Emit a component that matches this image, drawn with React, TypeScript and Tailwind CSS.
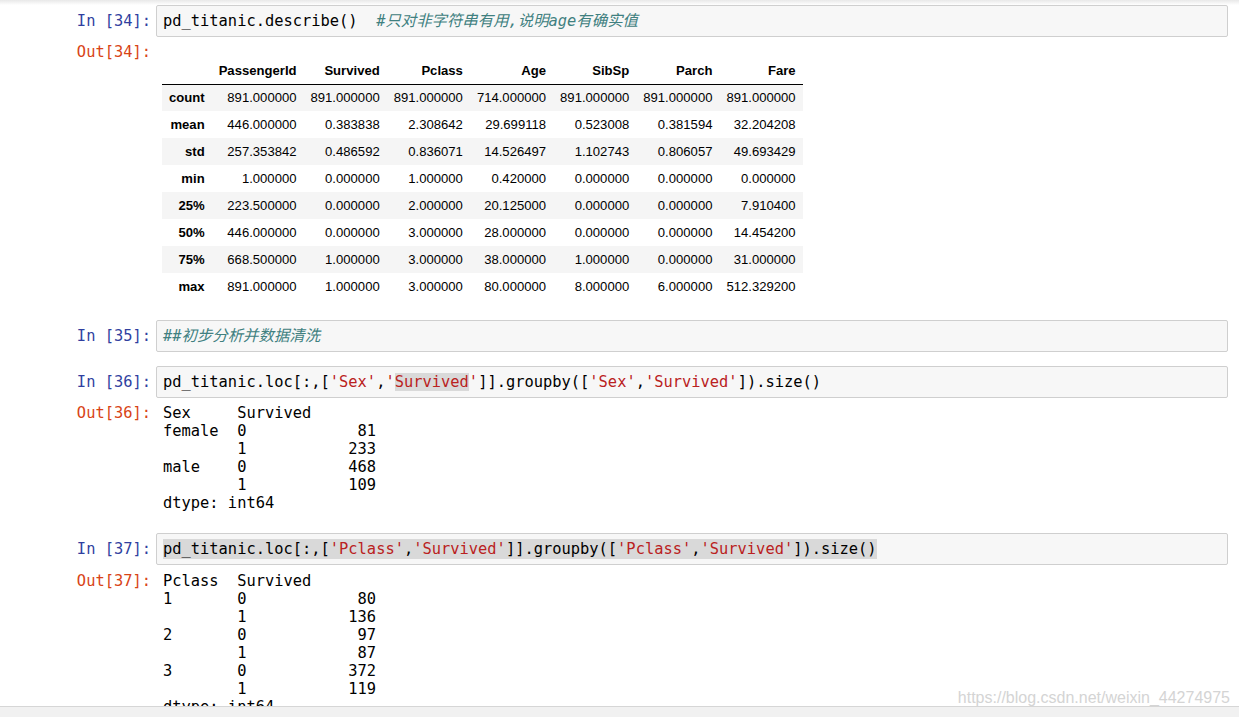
import React from 'react'

const mono = "font-['DejaVu_Sans_Mono','Noto_Sans_CJK_SC',monospace] text-[15.4px] leading-[18px]"

const columns = ['PassengerId', 'Survived', 'Pclass', 'Age', 'SibSp', 'Parch', 'Fare']

const rows: [string, string[]][] = [
  ['count', ['891.000000', '891.000000', '891.000000', '714.000000', '891.000000', '891.000000', '891.000000']],
  ['mean', ['446.000000', '0.383838', '2.308642', '29.699118', '0.523008', '0.381594', '32.204208']],
  ['std', ['257.353842', '0.486592', '0.836071', '14.526497', '1.102743', '0.806057', '49.693429']],
  ['min', ['1.000000', '0.000000', '1.000000', '0.420000', '0.000000', '0.000000', '0.000000']],
  ['25%', ['223.500000', '0.000000', '2.000000', '20.125000', '0.000000', '0.000000', '7.910400']],
  ['50%', ['446.000000', '0.000000', '3.000000', '28.000000', '0.000000', '0.000000', '14.454200']],
  ['75%', ['668.500000', '1.000000', '3.000000', '38.000000', '1.000000', '0.000000', '31.000000']],
  ['max', ['891.000000', '1.000000', '3.000000', '80.000000', '8.000000', '6.000000', '512.329200']],
]

function Prompt({ kind, n }: { kind: 'in' | 'out'; n: number }) {
  return (
    <div
      className={`${mono} w-[156px] shrink-0 pr-[5px] text-right whitespace-pre ${
        kind === 'in' ? 'text-[#303F9F]' : 'text-[#D84315]'
      }`}
    >
      {kind === 'in' ? `In [${n}]:` : `Out[${n}]:`}
    </div>
  )
}

function InputCell({ n, children, className = '' }: { n: number; children: React.ReactNode; className?: string }) {
  return (
    <div className={`flex items-center ${className}`}>
      <Prompt kind="in" n={n} />
      <div className="flex-1 mr-[11px] h-[32px] flex items-center px-[6px] bg-[#f7f7f7] border border-[#cfcfcf] rounded-[2px]">
        <div className={`${mono} text-black whitespace-pre`}>{children}</div>
      </div>
    </div>
  )
}

const S = ({ children }: { children: React.ReactNode }) => <span className="text-[#BA2121]">{children}</span>
const C = ({ children }: { children: React.ReactNode }) => <span className="text-[#408080] italic">{children}</span>

export default function App() {
  return (
    <div className="h-[717px] w-full flex flex-col overflow-hidden bg-white relative">
      <div className="h-[5px] shrink-0 bg-gradient-to-b from-[#e8e8e8] to-white" />

      <div className="flex-1 overflow-hidden">
        {/* In 34 */}
        <InputCell n={34}>
          pd_titanic.describe()  <C>#只对非字符串有用,说明age有确实值</C>
        </InputCell>

        <div className="flex mt-[6px]">
          <Prompt kind="out" n={34} />
          <div className="pl-[6px] pt-[15px]">
            <table className="border-collapse font-['Liberation_Sans',Arial,sans-serif] text-[13.1px] text-black">
              <thead>
                <tr className="h-[26px] border-b border-black">
                  <th className="px-[7px]" />
                  {columns.map((c) => (
                    <th key={c} className="px-[7px] text-right font-bold">
                      {c}
                    </th>
                  ))}
                </tr>
              </thead>
              <tbody>
                {rows.map(([label, vals], i) => (
                  <tr key={label} className={`h-[27px] ${i % 2 === 0 ? 'bg-[#f5f5f5]' : 'bg-white'}`}>
                    <th className="px-[7px] text-right font-bold">{label}</th>
                    {vals.map((v, j) => (
                      <td key={j} className="px-[7px] text-right">
                        {v}
                      </td>
                    ))}
                  </tr>
                ))}
              </tbody>
            </table>
          </div>
        </div>

        {/* In 35 */}
        <InputCell n={35} className="mt-[20px]">
          <C>##初步分析并数据清洗</C>
        </InputCell>

        {/* In 36 */}
        <InputCell n={36} className="mt-[14px]">
          pd_titanic.loc[:,[<S>'Sex'</S>,<S>'<span className="bg-[#d9d9d9]">Survived</span>'</S>]].groupby([<S>'Sex'</S>,<S>'Survived'</S>]).size()
        </InputCell>

        <div className="flex mt-[6px]">
          <Prompt kind="out" n={36} />
          <pre className={`${mono} pl-[7px] text-black`}>
{`Sex     Survived
female  0            81
        1           233
male    0           468
        1           109
dtype: int64`}
          </pre>
        </div>

        {/* In 37 */}
        <InputCell n={37} className="mt-[21px]">
          <span className="bg-[#d9d9d9] py-[1px]">
            pd_titanic.loc[:,[<S>'Pclass'</S>,<S>'Survived'</S>]].groupby([<S>'Pclass'</S>,<S>'Survived'</S>]).size()
          </span>
        </InputCell>

        <div className="flex mt-[7px]">
          <Prompt kind="out" n={37} />
          <pre className={`${mono} pl-[7px] text-black`}>
{`Pclass  Survived
1       0            80
        1           136
2       0            97
        1            87
3       0           372
        1           119
dtype: int64`}
          </pre>
        </div>
      </div>

      <div className="h-[11px] shrink-0 border-t border-[#d6d6d6] bg-[#f1f1f1]" />

      <div className="absolute right-[9px] bottom-[10px] font-['Liberation_Sans_Narrow','Liberation_Sans',sans-serif] text-[16px] leading-[18px] text-[#d4d4d4]">
        https://blog.csdn.net/weixin_44274975
      </div>
    </div>
  )
}
